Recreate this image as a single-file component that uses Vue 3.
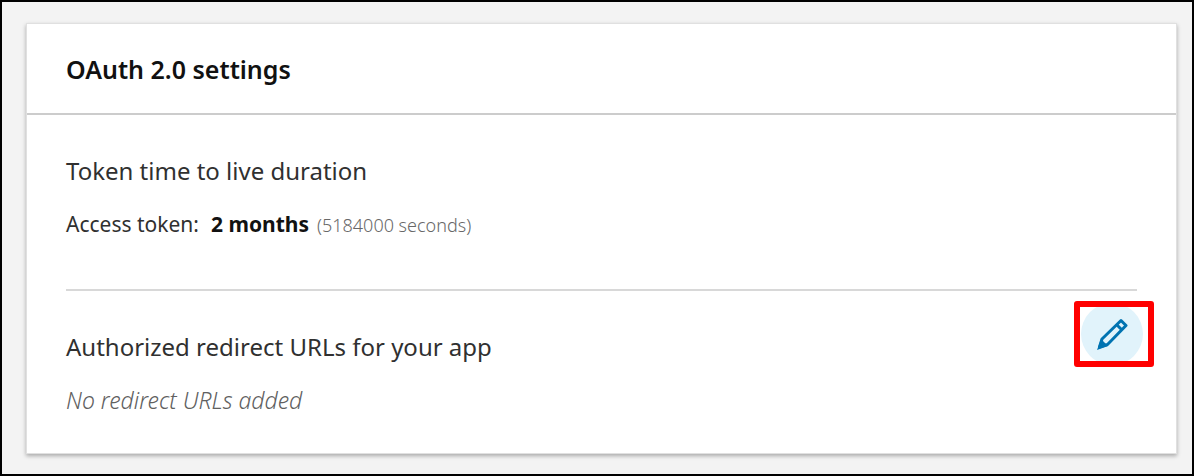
<script setup>
const token = { duration: '2 months', seconds: '(5184000 seconds)' }
</script>

<template>
  <main class="page">
    <article class="card">
      <header class="card-header">
        <h2>OAuth 2.0 settings</h2>
      </header>
      <div class="card-body">
        <section class="token">
          <h3>Token time to live duration</h3>
          <p class="detail">
            <span class="label">Access token:</span>
            <strong>{{ token.duration }}</strong>
            <span class="seconds">{{ token.seconds }}</span>
          </p>
        </section>
        <section class="redirects">
          <div>
            <h3>Authorized redirect URLs for your app</h3>
            <p class="empty">No redirect URLs added</p>
          </div>
          <div class="highlight">
            <button type="button" aria-label="Edit redirect URLs">
              <svg viewBox="0 0 32 32" width="32" height="32" aria-hidden="true">
                <path
                  fill="none"
                  stroke="#0073b1"
                  stroke-width="3"
                  stroke-linejoin="round"
                  d="M3.5 29 L6 21 L25 2.5 L30 7.5 L11.5 26.5 Z M20.5 6.5 L26 12"
                />
                <path fill="#0073b1" d="M1 32 L5 21 L12 28 Z" />
              </svg>
            </button>
          </div>
        </section>
      </div>
    </article>
  </main>
</template>

<style>
body {
  margin: 0;
}
</style>

<style scoped>
.page {
  box-sizing: border-box;
  min-height: 100vh;
  padding: 22px 16px 18px 25px;
  border: 2px solid #000;
  background: #f3f3f3;
  font-family: "Noto Sans", "Open Sans", sans-serif;
  color: #303030;
}

.card {
  background: #fff;
  box-shadow: 0 0 0 1px #e0e0e0, 0 2px 4px 1px rgba(0, 0, 0, 0.3);
}

.card-header {
  padding: 28px 39px 27px;
  border-bottom: 2px solid #ccc;
}

h2,
h3,
p {
  margin: 0;
}

h2 {
  font-size: 25px;
  line-height: 34px;
  font-weight: 600;
  color: #111;
}

h3 {
  font-size: 24px;
  line-height: 34px;
  font-weight: 400;
}

.card-body {
  padding: 39px 39px 37px;
}

.token {
  padding-bottom: 48px;
  border-bottom: 2px solid #d8d8d8;
}

.detail,
.empty {
  display: flex;
  align-items: baseline;
  margin-top: 20px;
  font-size: 21px;
  line-height: 32px;
}

.label {
  margin-right: 12px;
}

strong {
  margin-right: 8px;
  font-weight: 700;
  color: #111;
}

.seconds {
  color: #686868;
  font-size: 18px;
  font-weight: 300;
}

.redirects {
  display: flex;
  justify-content: space-between;
  padding-top: 39px;
}

.empty {
  color: #606060;
  font-size: 23px;
  font-style: italic;
  font-weight: 300;
}

.highlight {
  display: flex;
  box-sizing: border-box;
  width: 80px;
  height: 66px;
  margin: -29px -17px 0 0;
  border: 6px solid #f00;
  border-radius: 3px;
  overflow: hidden;
  align-items: center;
  justify-content: center;
}

button {
  display: flex;
  flex: none;
  align-items: center;
  justify-content: center;
  width: 62px;
  height: 62px;
  margin-right: 4px;
  padding: 0;
  border: 0;
  border-radius: 50%;
  background: #e1f3fb;
  cursor: pointer;
}
</style>
